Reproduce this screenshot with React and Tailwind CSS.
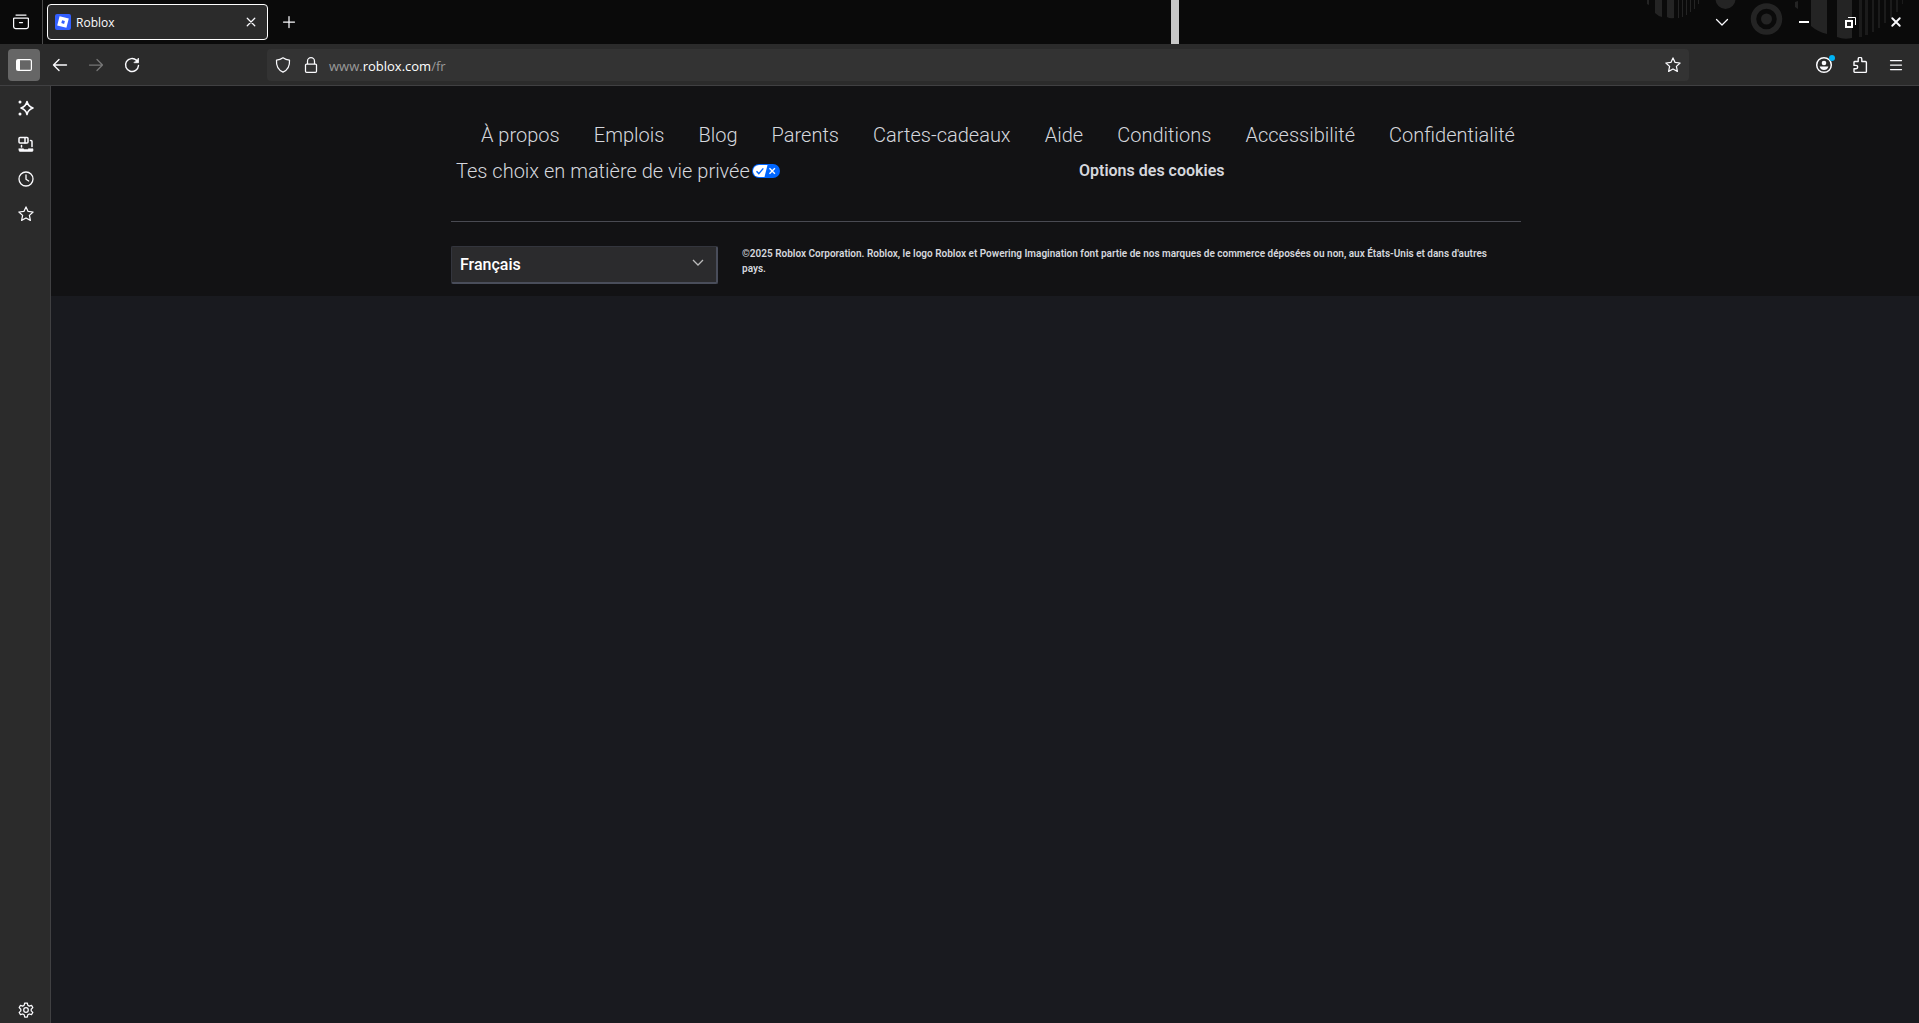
const footerLinks = [
  "À propos",
  "Emplois",
  "Blog",
  "Parents",
  "Cartes-cadeaux",
  "Aide",
  "Conditions",
  "Accessibilité",
  "Confidentialité",
];

const toolButton = "w-8 h-8 rounded flex items-center justify-center";
const windowButton = "w-[46px] h-11 flex items-center justify-center";

// 16px line icons shared by the browser chrome
const Icon = ({ children, className = "w-4 h-4" }) => (
  <svg
    viewBox="0 0 16 16"
    className={className}
    fill="none"
    stroke="currentColor"
    strokeWidth="1.25"
    strokeLinecap="round"
    strokeLinejoin="round"
    aria-hidden="true"
  >
    {children}
  </svg>
);

const StarIcon = () => (
  <Icon>
    <path d="M8 .9l2.100 4.500 5 .6-3.700 3.400 1 5L8 12l-4.400 2.400 1-5L.9 6l5-.6z" />
  </Icon>
);

const ThemeArt = () => (
  <svg
    className="absolute right-0 top-0 w-[319px] h-11"
    viewBox="0 0 319 44"
    fill="#242424"
    aria-hidden="true"
  >
    <path d="M47 0h2v5l-2-1z" />
    <path d="M55 0h7v17q-4-1-7-4zM67 0h7v18q-4 1-7-1z" />
    <path d="M78 0h1v18h-1zM82 0h1v17h-1zM86 0h1v15h-1zM90 0h1v12h-1zM94 0h1v9h-1zM98 0h1v4h-1z" />
    <circle cx="125.500" cy="-1" r="10" />
    <circle cx="166.500" cy="19" r="13" fill="none" stroke="#242424" strokeWidth="5.500" />
    <circle cx="166.500" cy="19" r="5.500" />
    <path d="M195 2l3-1v8l-3-2z" />
    <path d="M211 0h16v34q-9-2-16-8zM237 0h15v38q-8 2-15-1z" />
    <path fill="#1b1b1b" d="M259 0h3v37h-3zM265 0h3v35h-3zM272 0h2v32h-2zM278 0h2v28h-2zM284 0h2v23h-2zM290 0h2v18h-2zM296 0h2v12h-2zM302 0h1v4h-1z" />
  </svg>
);

const TitleBar = () => (
  <header className="relative h-11 bg-[#0a0a0a] flex items-center justify-between shrink-0">
    <ThemeArt />
    <div className="absolute left-[61%] top-0 w-2 h-11 bg-[#c8c8c8]" />
    <div className="flex items-center h-full">
      <button type="button" aria-label="Firefox View" className="w-[42px] h-full flex items-center justify-center">
        <Icon>
          <path d="M3 1h10M1.500 4h13a.9.9 0 0 1 .9.9v7.600a2 2 0 0 1-2 2H2.600a2 2 0 0 1-2-2V4.900a.9.9 0 0 1 .9-.9zM6.500 8.500h3" />
        </Icon>
      </button>
      <div className="w-px h-full bg-[#4b4b4b]" />
      <div className="ml-1 w-[221px] h-9 rounded border border-white bg-[#2b2b2b] flex items-center pl-[7px] pr-2">
        <svg viewBox="0 0 16 16" className="w-4 h-4" aria-hidden="true">
          <rect width="16" height="16" rx="2" fill="#335fff" />
          <path fill="#fff" fillRule="evenodd" d="M4.600 2.200l9.200 2.400-2.400 9.200-9.200-2.400zM7.100 6.300l-.8 2.800 2.800.8.8-2.800z" />
        </svg>
        <span className="ml-[5px] pt-0.5 flex-1 text-xs">Roblox</span>
        <button type="button" aria-label="Fermer l'onglet" className="w-4 h-4 flex items-center justify-center">
          <Icon className="w-[10px] h-[10px]">
            <path d="M2 2l12 12M14 2L2 14" strokeWidth="2" />
          </Icon>
        </button>
      </div>
      <button type="button" aria-label="Nouvel onglet" className="ml-[5px] w-8 h-8 flex items-center justify-center">
        <Icon>
          <path d="M8 2.500v11M2.500 8h11" />
        </Icon>
      </button>
    </div>
    <div className="relative flex items-center">
      <button type="button" aria-label="Lister les onglets" className="mr-[43px] w-8 h-8 flex items-center justify-center">
        <Icon>
          <path d="M2.500 5.500L8 11l5.500-5.500" />
        </Icon>
      </button>
      <button type="button" aria-label="Réduire" className={windowButton}>
        <svg viewBox="0 0 10 2" className="w-[10px] h-[2px]" aria-hidden="true">
          <path d="M0 0h10v2H0z" fill="#fff" />
        </svg>
      </button>
      <button type="button" aria-label="Restaurer" className={windowButton}>
        <svg viewBox="0 0 11 11" className="w-[11px] h-[11px]" fill="none" stroke="#fff" aria-hidden="true">
          <path d="M1 4h6v6H1z" strokeWidth="2" />
          <path d="M3 .5h7.500V8" />
        </svg>
      </button>
      <button type="button" aria-label="Fermer" className={windowButton}>
        <Icon className="w-3 h-3">
          <path d="M3 3l10 10M13 3L3 13" strokeWidth="2.500" />
        </Icon>
      </button>
    </div>
  </header>
);

const Toolbar = () => (
  <div className="h-[42px] border-b border-[#404042] bg-[#2b2b2b] flex items-center gap-1 pl-2 pr-[7px] shrink-0">
    <button type="button" aria-label="Panneaux latéraux" className={`${toolButton} bg-[#666]`}>
      <svg viewBox="0 0 16 16" className="w-4 h-4" aria-hidden="true">
        <rect x=".6" y="2.600" width="14.800" height="10.800" rx="1.500" fill="none" stroke="#fff" strokeWidth="1.200" />
        <path d="M1 3h3v10H1z" fill="#fff" />
      </svg>
    </button>
    <button type="button" aria-label="Page précédente" className={toolButton}>
      <Icon>
        <path d="M14.500 8h-13M7 2.500L1.500 8 7 13.500" strokeWidth="1.400" />
      </Icon>
    </button>
    <button type="button" aria-label="Page suivante" className={`${toolButton} text-[#777]`}>
      <Icon>
        <path d="M1.500 8h13M9 2.500L14.500 8 9 13.500" />
      </Icon>
    </button>
    <button type="button" aria-label="Actualiser" className={toolButton}>
      <Icon>
        <path d="M14.500 8.500A6.500 6.500 0 1 1 12.500 3.300" strokeWidth="1.400" />
        <path d="M14.500 1.500v4.200h-4.200z" fill="currentColor" strokeWidth=".8" />
      </Icon>
    </button>
    <div className="ml-[115px] mr-[115px] flex-1 h-8 rounded bg-[#333] flex items-center px-2">
      <button type="button" aria-label="Protection" className="w-4 h-4">
        <Icon>
          <path d="M8 .8C6 2.300 3.500 3 1.500 3.100c-.4 5.500 1.500 9.800 6.500 12 5-2.200 6.900-6.500 6.500-12C12.500 3 10 2.300 8 .8z" />
        </Icon>
      </button>
      <button type="button" aria-label="Connexion sécurisée" className="ml-3 w-4 h-4">
        <Icon>
          <path d="M4.500 7V4.200a3.500 3.500 0 0 1 7 0V7M3.500 7h9a1 1 0 0 1 1 1v6.300a1 1 0 0 1-1 1h-9a1 1 0 0 1-1-1V8a1 1 0 0 1 1-1z" />
        </Icon>
      </button>
      <label htmlFor="address" className="ml-[10px] pt-1 text-[13px] text-[#9a9a9a]">
        www.<span className="text-white">roblox.com</span>/fr
      </label>
      <input id="address" type="text" className="flex-1 min-w-0 bg-transparent outline-none text-[13px]" />
      <button type="button" aria-label="Ajouter aux favoris" className="w-4 h-4">
        <StarIcon />
      </button>
    </div>
    <button type="button" aria-label="Compte" className={toolButton}>
      <Icon className="w-4 h-4 overflow-visible">
        <circle cx="8" cy="8" r="7.300" strokeWidth="1.500" />
        <circle cx="8" cy="6" r="2.300" fill="currentColor" stroke="none" />
        <path d="M3.600 9.600h8.800c-.6 2.400-2.300 3.500-4.400 3.500s-3.800-1.100-4.400-3.500z" fill="currentColor" stroke="none" />
        <circle cx="16" cy="1" r="3" fill="#00b3f4" stroke="none" />
      </Icon>
    </button>
    <button type="button" aria-label="Extensions" className={toolButton}>
      <Icon>
        <path
          d="M2.600 4.500h3.600V2.200a1.800 1.800 0 0 1 3.600 0v2.300h3.600a1 1 0 0 1 1 1v8.900a1 1 0 0 1-1 1H3a1 1 0 0 1-1-1v-2.600h2a1.700 1.700 0 0 0 0-3.400H2V5.100a.6.600 0 0 1 .6-.6z"
          strokeWidth="1.400"
        />
      </Icon>
    </button>
    <button type="button" aria-label="Menu" className={toolButton}>
      <Icon>
        <path d="M2.500 3.500h11M2.500 8h11M2.500 12.500h11" />
      </Icon>
    </button>
  </div>
);

const Sidebar = () => (
  <aside className="w-[51px] border-r border-[#404042] bg-[#2b2b2b] flex flex-col justify-between items-center pt-1 pl-0.5 shrink-0">
    <div className="flex flex-col">
      <button type="button" aria-label="Chatbot IA" className="w-8 h-9 flex items-center justify-center">
        <Icon>
          <path d="M9 1.500c.8 3.800 2.200 5.300 6 6.500-3.800 1.200-5.200 2.700-6 6.500-.8-3.800-2.200-5.300-6-6.500 3.800-1.200 5.200-2.700 6-6.500z" strokeWidth="1.600" />
          <circle cx="2" cy="2" r="1.500" fill="currentColor" stroke="none" />
          <circle cx="2" cy="14" r="1.500" fill="currentColor" stroke="none" />
        </Icon>
      </button>
      <button type="button" aria-label="Onglets synchronisés" className="w-8 h-9 flex items-center justify-center">
        <Icon>
          <rect x="1" y="1.500" width="9" height="5.500" rx="1" strokeWidth="1.500" />
          <path d="M7 2v5M12.500 4.500h.5a1 1 0 0 1 1 1v5M3.500 9.500v1.500" strokeWidth="1.500" />
          <path d="M1 12.800h4.500l.8.800h3.400l.8-.8H15v1.700a.9.900 0 0 1-.9.900H1.900a.9.900 0 0 1-.9-.9z" fill="currentColor" strokeWidth=".6" />
        </Icon>
      </button>
      <button type="button" aria-label="Historique" className="w-8 h-[34px] flex items-center justify-center">
        <Icon>
          <circle cx="8" cy="8" r="7" strokeWidth="1.300" />
          <path d="M8 4v4.200l2.700 1.800" strokeWidth="1.300" />
        </Icon>
      </button>
      <button type="button" aria-label="Marque-pages" className="w-8 h-9 flex items-center justify-center">
        <StarIcon />
      </button>
    </div>
    <button type="button" aria-label="Paramètres" className="w-8 h-[27px] flex items-center justify-center">
      <Icon>
        <circle cx="8" cy="8" r="2.300" />
        <path d="M6.700 1h2.600l.5 2.200 1.500.9 2.200-.8 1.300 2.300L13.200 7.200v1.700l1.600 1.500-1.300 2.300-2.200-.7-1.500.8-.5 2.200H6.700l-.5-2.200-1.500-.8-2.200.7-1.300-2.300 1.600-1.500V7.200L1.200 5.600l1.300-2.300 2.200.8 1.500-.9z" />
      </Icon>
    </button>
  </aside>
);

const PrivacyBadge = () => (
  <svg viewBox="0 0 28 14" className="ml-0.5 w-7 h-[14px]" aria-hidden="true">
    <rect width="28" height="14" rx="7" fill="#06f" />
    <path d="M7 1h8.500l-3 12H7A6 6 0 0 1 7 1z" fill="#fff" />
    <path d="M4.500 7.300l2.300 2.300 4.500-5.200" fill="none" stroke="#06f" strokeWidth="1.400" />
    <path d="M17.500 4.200l5.400 5.600M22.900 4.200l-5.400 5.600" stroke="#fff" strokeWidth="1.400" />
  </svg>
);

const Footer = () => (
  <footer className="bg-[#121214] text-[#d5d7dd] font-['Roboto',sans-serif] pt-[33px] pb-3 pl-0.5">
    <div className="max-w-[1070px] mx-auto">
      <ul className="flex justify-between pl-[30px] pr-[6px] text-xl leading-8 font-light">
        {footerLinks.map((label) => (
          <li key={label}>
            <a href="#">{label}</a>
          </li>
        ))}
      </ul>
      <div className="mt-1 grid grid-cols-[628px_1fr] items-center">
        <a href="#" className="pl-[5px] flex items-center text-xl leading-8 font-light">
          Tes choix en matière de vie privée
          <PrivacyBadge />
        </a>
        <button type="button" className="justify-self-start text-base leading-8 font-semibold">
          Options des cookies
        </button>
      </div>
      <hr className="mt-[34px] border-[#494a52]" />
      <div className="pt-6 flex items-start gap-6">
        <div className="relative w-[267px] shrink-0">
          <select
            aria-label="Langue"
            className="w-full h-[38px] appearance-none rounded-xs border border-b-2 border-r-2 border-[#33353d] border-b-[#494d5a] border-r-[#494d5a] bg-[#2b2b2d] pl-2 text-base font-medium text-white"
          >
            <option>Français</option>
          </select>
          <svg
            viewBox="0 0 12 8"
            className="absolute right-[14px] top-[13px] w-3 h-2 pointer-events-none"
            fill="none"
            stroke="#bbb"
            strokeWidth="1.300"
            aria-hidden="true"
          >
            <path d="M1 1l5 5 5-5" />
          </svg>
        </div>
        <p className="pr-4 text-[10px] leading-[15px] font-semibold">
          ©2025 Roblox Corporation. Roblox, le logo Roblox et Powering Imagination font partie de nos marques de
          commerce déposées ou non, aux États-Unis et dans d'autres pays.
        </p>
      </div>
    </div>
  </footer>
);

const App = () => {
  return (
    <div className="h-screen flex flex-col bg-[#191a1f] text-[#fbfbfe] font-['Open_Sans','Noto_Sans',sans-serif]">
      <TitleBar />
      <Toolbar />
      <div className="flex flex-1 min-h-0">
        <Sidebar />
        <main className="flex-1 min-w-0">
          <Footer />
        </main>
      </div>
    </div>
  );
};

export default App;
